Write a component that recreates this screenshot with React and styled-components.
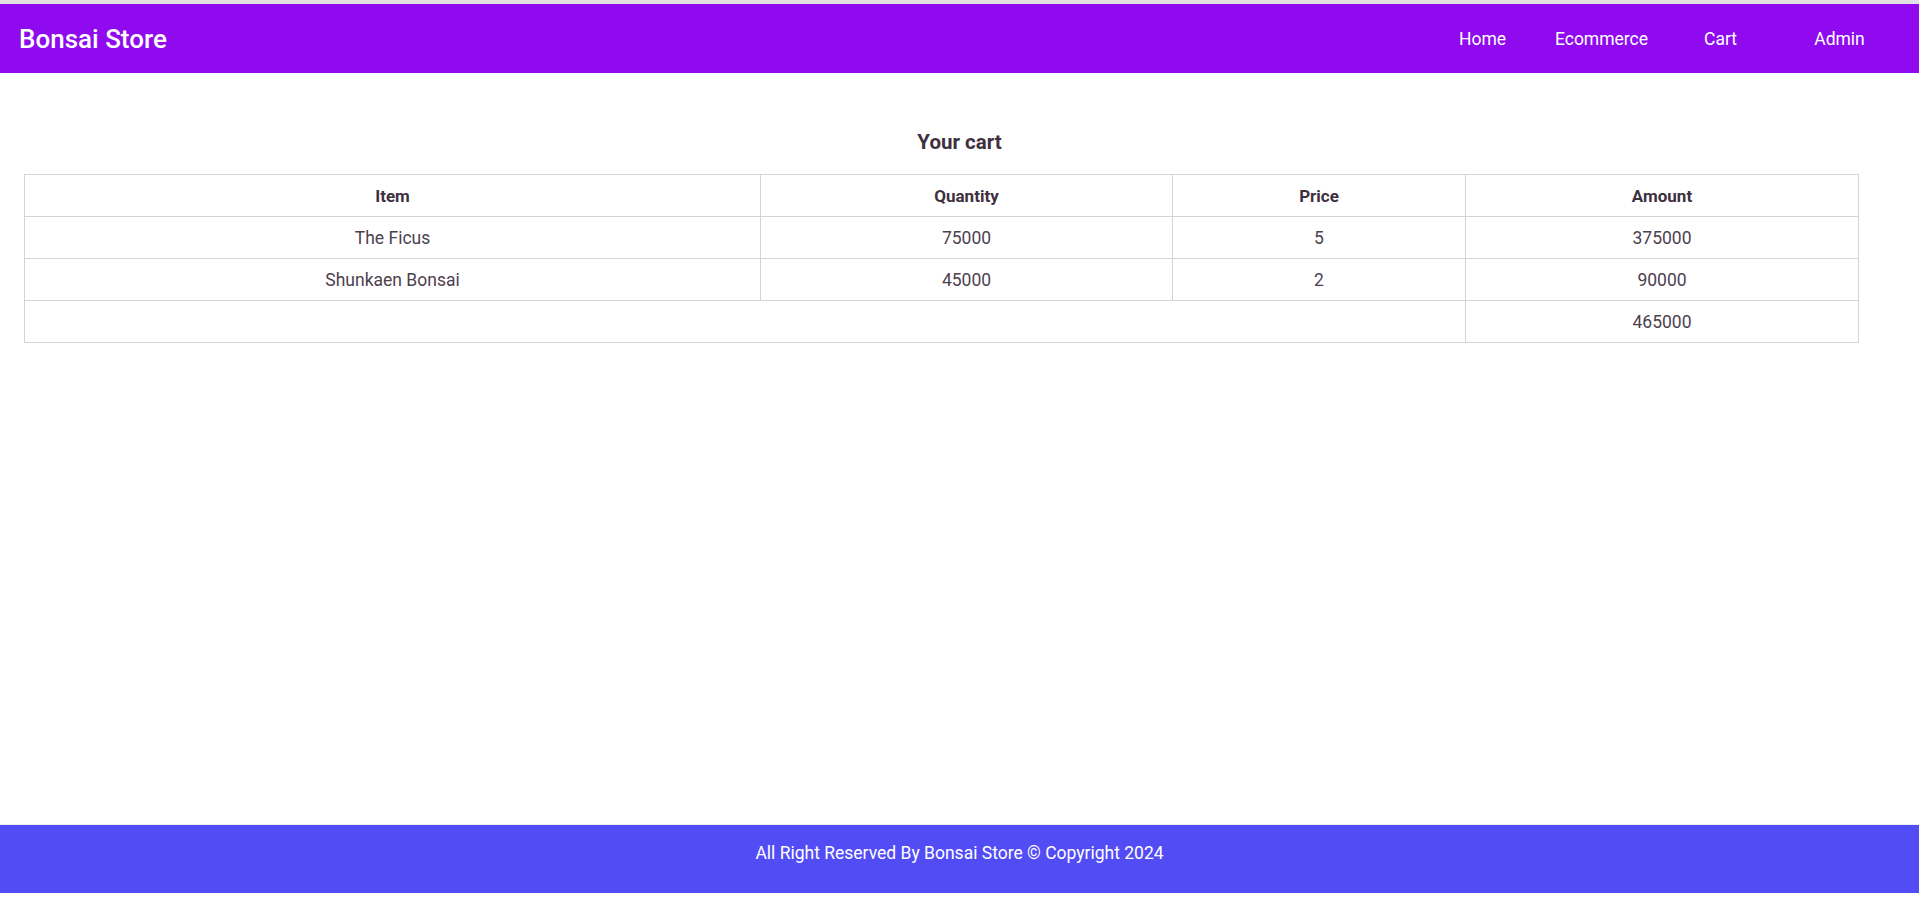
import React from "react";
import styled, { createGlobalStyle } from "styled-components";

const GlobalStyle = createGlobalStyle`
  html, body {
    margin: 0;
    padding: 0;
    background: #ffffff;
    font-family: Roboto, "Liberation Sans", Arial, sans-serif;
  }
`;

const Page = styled.div`
  min-height: 100vh;
  display: flex;
  flex-direction: column;
  border-top: 4px solid #e2e2e2;
  box-sizing: border-box;
`;

const NavBar = styled.header`
  display: flex;
  flex-direction: row;
  justify-content: space-between;
  align-items: center;
  height: 69px;
  padding: 0 20px 0 19px;
  background-color: #8f0aee;
`;

const Brand = styled.div`
  color: #ffffff;
  font-size: 26px;
  font-weight: 500;
`;

const Links = styled.nav`
  display: flex;
  flex-direction: row;
  align-items: center;
`;

const NavLink = styled.a`
  width: 119px;
  text-align: center;
  color: #ffffff;
  font-size: 17.5px;
  text-decoration: none;
  cursor: pointer;
`;

const Main = styled.main`
  flex: 1;
  padding: 57px 60px 0 24px;
`;

const Title = styled.h2`
  margin: 0 0 20px 36px;
  text-align: center;
  font-size: 20.5px;
  line-height: 24px;
  font-weight: 700;
  color: #3f3040;
`;

const Table = styled.table`
  width: 100%;
  border-collapse: collapse;
  table-layout: fixed;
`;

const Cell = styled.td`
  height: 41px;
  padding: 0;
  border: 1px solid #d4d4d4;
  text-align: center;
  font-size: ${(p) => (p.$head ? "17px" : "17.5px")};
  font-weight: ${(p) => (p.$head ? 700 : 400)};
  color: ${(p) => (p.$head ? "#3f3040" : "#4d4150")};
`;

const Footer = styled.footer`
  height: 69px;
  margin-bottom: 12px;
  display: flex;
  justify-content: center;
  align-items: center;
  padding-bottom: 12px;
  box-sizing: border-box;
  background-color: #524cf5;
  border-top: 1px solid #ececec;
  color: #ffffff;
  font-size: 17.5px;
`;

const items = [
  { name: "The Ficus", qty: 75000, price: 5 },
  { name: "Shunkaen Bonsai", qty: 45000, price: 2 },
];

export default function App() {
  const total = items.reduce((s, i) => s + i.qty * i.price, 0);
  return (
    <>
      <GlobalStyle />
      <Page>
        <NavBar>
          <Brand>Bonsai Store</Brand>
          <Links>
            <NavLink>Home</NavLink>
            <NavLink>Ecommerce</NavLink>
            <NavLink>Cart</NavLink>
            <NavLink>Admin</NavLink>
          </Links>
        </NavBar>
        <Main>
          <Title>Your cart</Title>
          <Table>
            <colgroup>
              <col style={{ width: "736px" }} />
              <col style={{ width: "412px" }} />
              <col style={{ width: "293px" }} />
              <col />
            </colgroup>
            <thead>
              <tr>
                <Cell as="th" $head>Item</Cell>
                <Cell as="th" $head>Quantity</Cell>
                <Cell as="th" $head>Price</Cell>
                <Cell as="th" $head>Amount</Cell>
              </tr>
            </thead>
            <tbody>
              {items.map((it) => (
                <tr key={it.name}>
                  <Cell>{it.name}</Cell>
                  <Cell>{it.qty}</Cell>
                  <Cell>{it.price}</Cell>
                  <Cell>{it.qty * it.price}</Cell>
                </tr>
              ))}
              <tr>
                <Cell colSpan={3}></Cell>
                <Cell>{total}</Cell>
              </tr>
            </tbody>
          </Table>
        </Main>
        <Footer>All Right Reserved By Bonsai Store © Copyright 2024</Footer>
      </Page>
    </>
  );
}
